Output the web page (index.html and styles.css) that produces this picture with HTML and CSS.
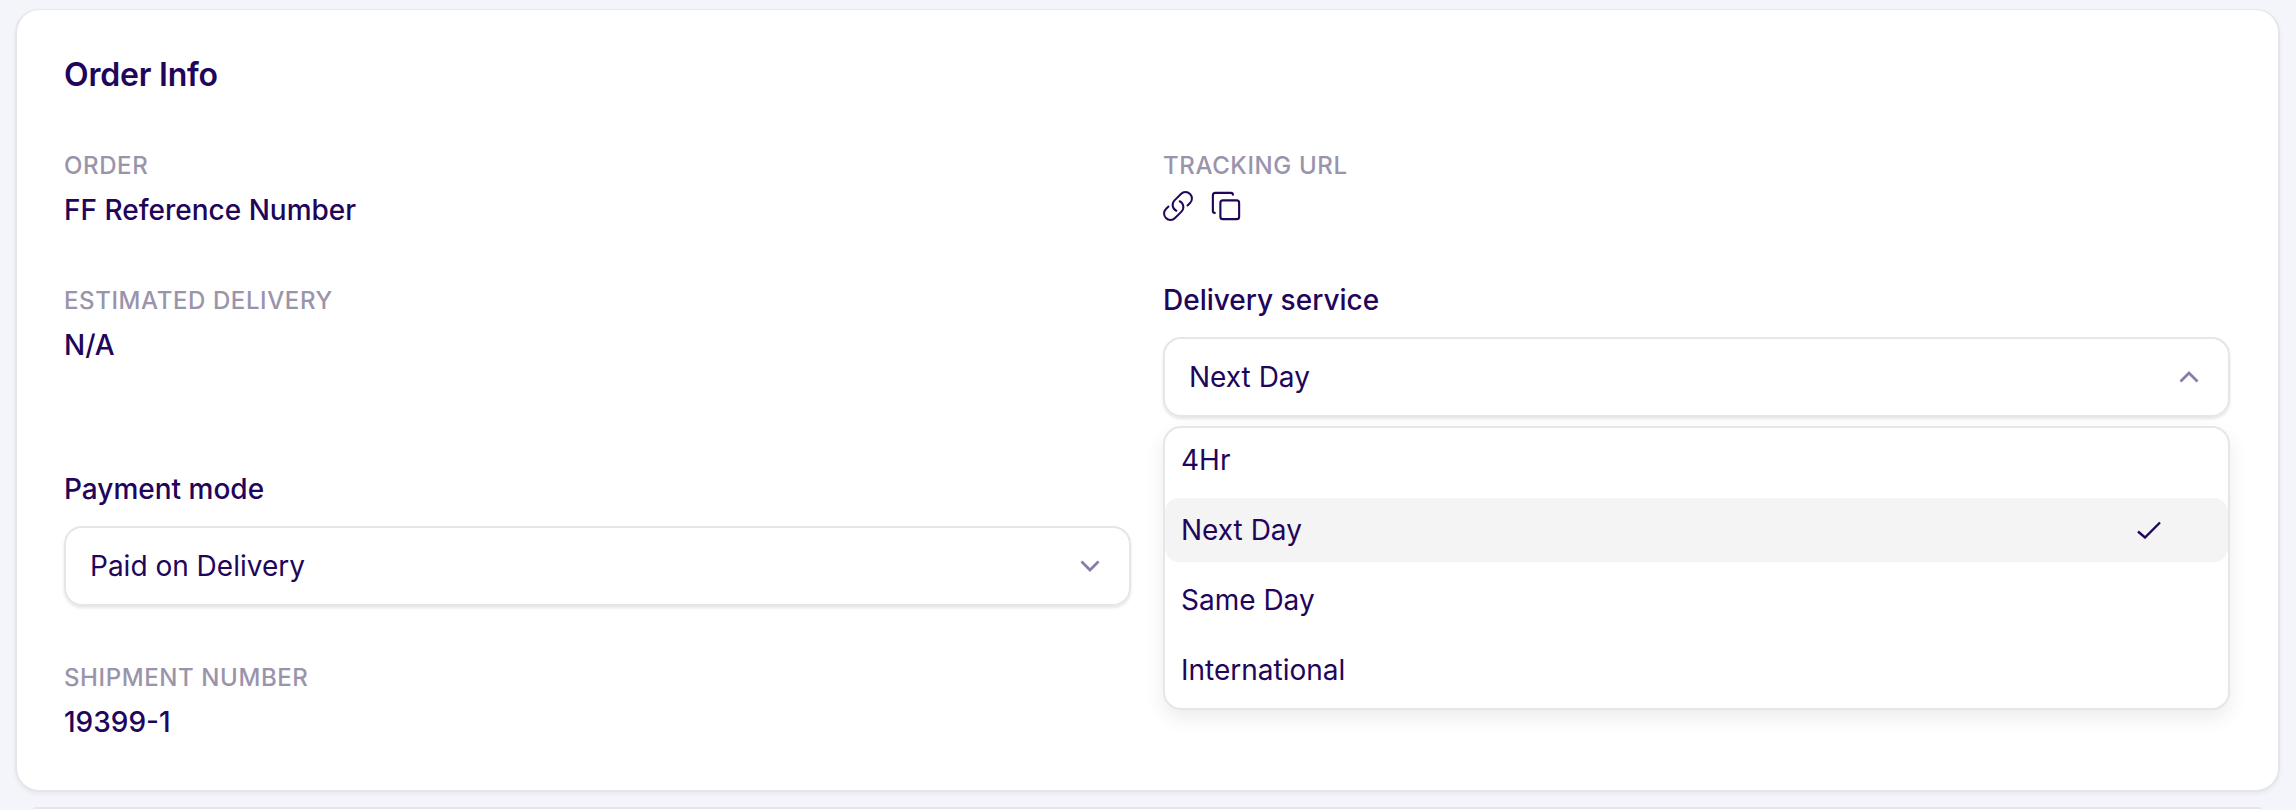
FILE: index.html
```html
<!DOCTYPE html>
<html lang="en">
<head>
    <meta charset="UTF-8">
    <title>Order Info</title>
    <link rel="stylesheet" href="styles.css">
</head>

<body>
    <div class="card">
        <h2>Order Info</h2>
        <div class="columns">
            <div class="column">
                <div class="field">
                    <div class="label">ORDER</div>
                    <div class="value">FF Reference Number</div>
                </div>
                <div class="field field-eta">
                    <div class="label">ESTIMATED DELIVERY</div>
                    <div class="value">N/A</div>
                </div>
                <div class="select-field">
                    <div class="select-label">Payment mode</div>
                    <div class="select">
                        <span>Paid on Delivery</span>
                        <svg class="chevron" viewBox="0 0 20 12"><path d="M1.5 1.5 10 10l8.5-8.5"/></svg>
                    </div>
                </div>
                <div class="field field-shipment">
                    <div class="label">SHIPMENT NUMBER</div>
                    <div class="value">19399-1</div>
                </div>
            </div>
            <div class="column">
                <div class="field">
                    <div class="label">TRACKING URL</div>
                    <div class="icons">
                        <svg class="icon icon-link" viewBox="1.5 1.5 21 21"><path d="M13.19 8.688a4.5 4.5 0 0 1 1.242 7.244l-4.5 4.5a4.5 4.5 0 0 1-6.364-6.364l1.757-1.757m13.35-.622 1.757-1.757a4.5 4.5 0 0 0-6.364-6.364l-4.5 4.5a4.5 4.5 0 0 0 1.242 7.244"/></svg>
                        <svg class="icon" viewBox="0 0 24 24"><rect x="7.5" y="7.5" width="15" height="15" rx="2"/><path d="M3 17.5c-1 0-1.5-.7-1.5-1.5V3.5c0-1.2.8-2 2-2H16c.8 0 1.5.5 1.5 1.5"/></svg>
                    </div>
                </div>
                <div class="select-field select-delivery">
                    <div class="select-label">Delivery service</div>
                    <div class="select">
                        <span>Next Day</span>
                        <svg class="chevron" viewBox="0 0 20 12"><path d="M1.5 10.5 10 2l8.5 8.5"/></svg>
                    </div>
                    <div class="menu">
                        <div class="option">4Hr</div>
                        <div class="option selected">
                            <span>Next Day</span>
                            <svg class="check" viewBox="0 0 24 18"><path d="M1 10.5 8 16.5 23 1.5"/></svg>
                        </div>
                        <div class="option">Same Day</div>
                        <div class="option">International</div>
                    </div>
                </div>
            </div>
        </div>
    </div>
    <div class="next-card"></div>
</body>
</html>
```

FILE: styles.css
```css
html {
    height: 810px;
    overflow: hidden;
}

body {
    font-family: Inter, 'Noto Sans', sans-serif;
    margin: 0;
    height: 810px;
    overflow: hidden;
    padding: 9px 16px 0 15px;
    box-sizing: border-box;
    background-color: #f4f5fb;
    color: #21055a;
}

.card {
    background-color: #fff;
    border: 2px solid #e6e6ea;
    border-top-width: 1px;
    border-radius: 24px;
    height: 783px;
    box-sizing: border-box;
    padding: 47px 48px 0 47px;
    box-shadow: 0 2px 4px rgba(0, 0, 0, 0.05);
}

.next-card {
    background-color: #fff;
    border-top: 2px solid #e6e6ea;
    border-radius: 24px 24px 0 0;
    margin: 15px 18px 0 18px;
    height: 1px;
}

h2 {
    margin: 0;
    font-size: 32px;
    line-height: 36px;
    font-weight: 600;
    letter-spacing: -0.2px;
}

.columns {
    display: grid;
    grid-template-columns: 1fr 1fr;
    column-gap: 32px;
    margin-top: 58px;
}

.column {
    display: flex;
    flex-direction: column;
}

.label {
    font-size: 24px;
    line-height: 30px;
    font-weight: 500;
    letter-spacing: 0.6px;
    color: #9a94ab;
}

.value {
    font-size: 28px;
    line-height: 36px;
    font-weight: 500;
    margin-top: 11px;
}

.field-eta {
    margin-top: 58px;
}

.field-shipment {
    margin-top: 57px;
}

.select-field {
    margin-top: 108px;
}

.select-delivery {
    margin-top: 61px;
    position: relative;
}

.select-label {
    font-size: 28px;
    line-height: 36px;
    font-weight: 500;
}

.select {
    display: flex;
    justify-content: space-between;
    align-items: center;
    height: 80px;
    box-sizing: border-box;
    margin-top: 19px;
    padding: 0 29px 0 24px;
    border: 2px solid #e6e6ea;
    border-radius: 18px;
    font-size: 28px;
    box-shadow: 0 2px 3px rgba(0, 0, 0, 0.1);
}

.chevron {
    width: 20px;
    height: 12px;
    fill: none;
    stroke: #8c7aa9;
    stroke-width: 2.8;
}

.icons {
    display: flex;
    gap: 18px;
    margin-top: 10px;
}

.icon {
    width: 30px;
    height: 30px;
    fill: none;
    stroke: #21055a;
    stroke-width: 1.7;
    stroke-linecap: round;
    stroke-linejoin: round;
}

.icon-link {
    stroke-width: 1.4;
}

.menu {
    position: absolute;
    top: 144px;
    left: 0;
    right: 0;
    padding-bottom: 6px;
    display: flex;
    flex-direction: column;
    gap: 6px;
    background-color: #fff;
    border: 2px solid #e6e6ea;
    border-radius: 18px;
    box-sizing: border-box;
    box-shadow: 0 8px 20px rgba(0, 0, 0, 0.08);
}

.option {
    display: flex;
    justify-content: space-between;
    align-items: center;
    height: 64px;
    padding: 0 67px 0 16px;
    border-radius: 14px;
    font-size: 28px;
}

.selected {
    background-color: #f4f4f5;
}

.check {
    width: 24px;
    height: 18px;
    fill: none;
    stroke: #21055a;
    stroke-width: 2.4;
}
```
